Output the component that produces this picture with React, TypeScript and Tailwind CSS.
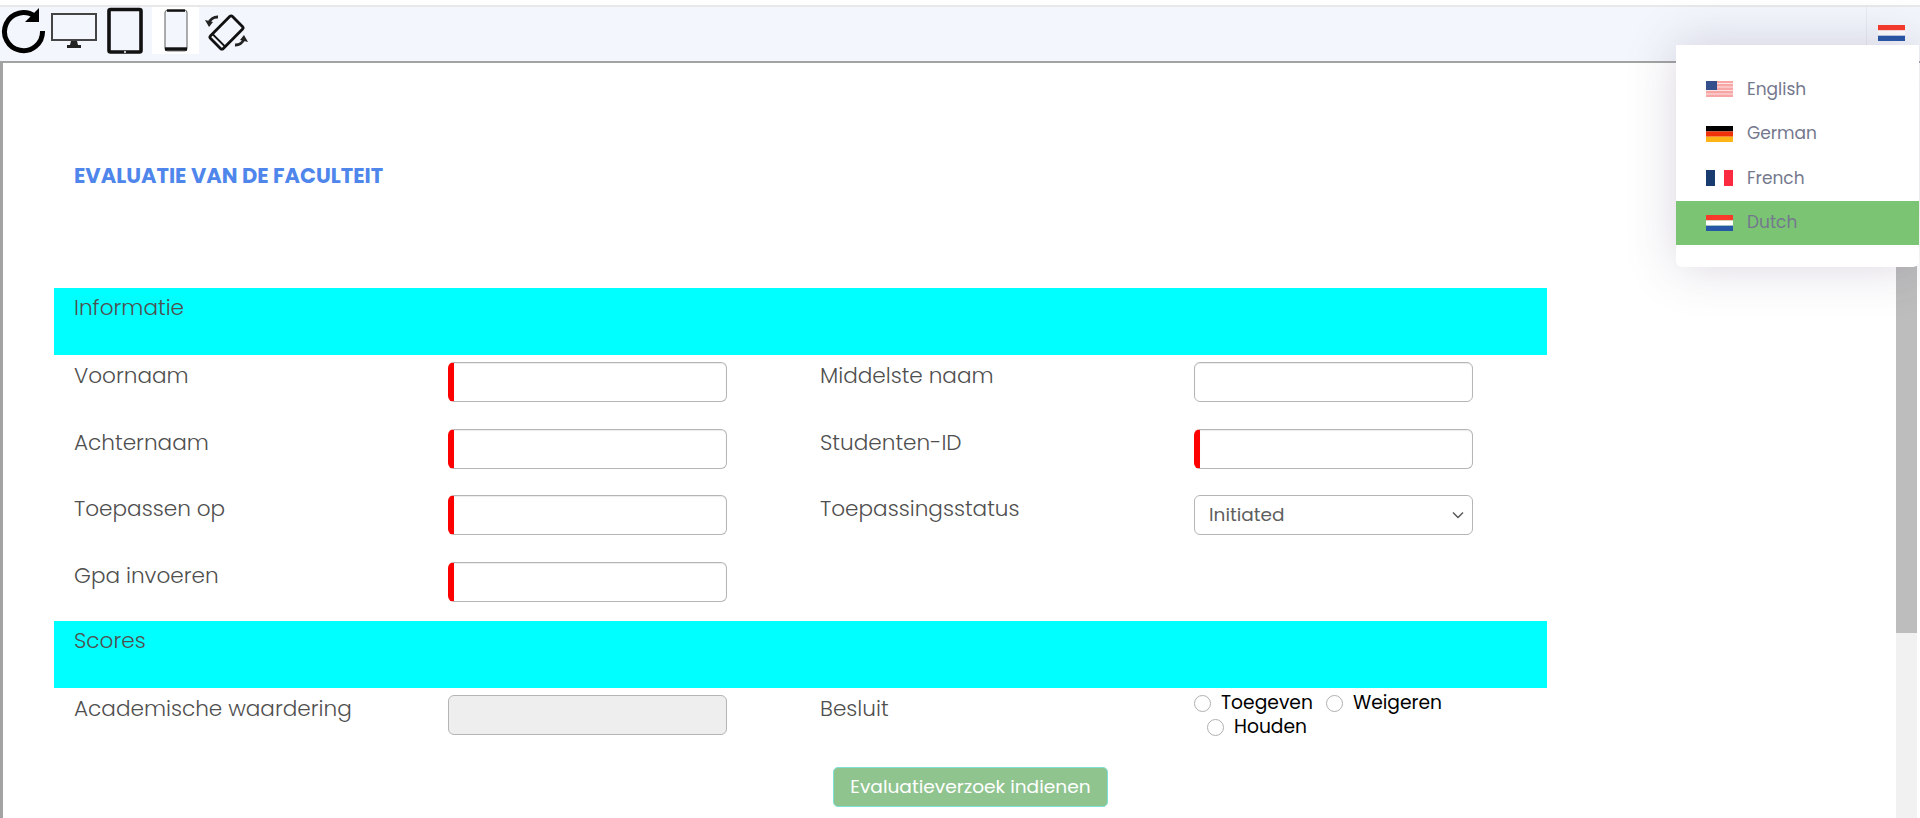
import React from "react";

const font = "font-['Poppins','Lato','Open_Sans',sans-serif]";

function Flag({ kind }: { kind: string }) {
  if (kind === "us")
    return (
      <svg width="27" height="16" viewBox="0 0 27 16" className="shrink-0">
        <rect width="27" height="16" fill="#f8a5a5" />
        <path d="M0 2.5h27M0 6h27M0 9.5h27M0 13h27" stroke="#fde4e4" strokeWidth="1.2" />
        <rect width="11" height="9" fill="#34508c" />
      </svg>
    );
  if (kind === "de")
    return (
      <svg width="27" height="16" viewBox="0 0 27 16" className="shrink-0">
        <rect width="27" height="5.4" fill="#000" />
        <rect y="5.4" width="27" height="5.3" fill="#f0320a" />
        <rect y="10.7" width="27" height="5.3" fill="#fdb515" />
      </svg>
    );
  if (kind === "fr")
    return (
      <svg width="27" height="16" viewBox="0 0 27 16" className="shrink-0">
        <rect width="9" height="16" fill="#193c70" />
        <rect x="9" width="9" height="16" fill="#fff" />
        <rect x="18" width="9" height="16" fill="#fc2a41" />
      </svg>
    );
  return (
    <svg width="27" height="16" viewBox="0 0 27 16" className="shrink-0">
      <rect width="27" height="5.4" fill="#f93a2a" />
      <rect y="5.4" width="27" height="5.3" fill="#fff" />
      <rect y="10.7" width="27" height="5.3" fill="#2657a7" />
    </svg>
  );
}

function Toolbar() {
  return (
    <div className="h-[54px] flex bg-[#f3f6fc] items-start overflow-hidden">
      <svg width="48" height="54" viewBox="0 0 48 54" className="shrink-0">
        <path d="M35 9.5 A19 19 0 1 0 42.5 24" fill="none" stroke="#000" strokeWidth="5" />
        <path d="M39 1 L39 15 L25 15 Z" fill="#000" />
      </svg>
      <svg width="55" height="54" viewBox="48 0 55 54" className="shrink-0">
        <rect x="52" y="7" width="44" height="26" fill="#f3f6fc" stroke="#444" strokeWidth="2" />
        <path d="M71 34h6l1 4h3v3H67v-3h3z" fill="#222" />
      </svg>
      <svg width="45" height="54" viewBox="103 0 45 54" className="shrink-0">
        <rect x="109" y="2.5" width="32" height="42.5" rx="1.5" fill="#f3f6fc" stroke="#111" strokeWidth="3.6" />
        <circle cx="125" cy="45" r="1" fill="#fff" />
      </svg>
      <div className="w-[47px] h-[47px] ml-[4px] bg-white shrink-0 flex items-start justify-center pt-[2px]">
        <svg width="24" height="43" viewBox="0 0 24 43">
          <rect x="1" y="1" width="22" height="41" rx="3" fill="#f3f6fc" stroke="#777" strokeWidth="1.2" />
          <path d="M3 1.6h18" stroke="#111" strokeWidth="2.4" />
          <path d="M1 40h22" stroke="#111" strokeWidth="3.4" />
        </svg>
      </div>
      <svg width="48" height="48" viewBox="0 0 48 48" className="ml-[2px] shrink-0">
        <g transform="rotate(45 25.5 25.5)">
          <rect x="16.5" y="10" width="18" height="31" rx="2" fill="none" stroke="#111" strokeWidth="2.8" />
          <path d="M16.5 36.5h18" stroke="#111" strokeWidth="2" />
        </g>
        <path d="M8 16a9 9 0 0 1 9-6" fill="none" stroke="#222" strokeWidth="2.8" />
        <path d="M4 13l8 2-4 5z" fill="#222" />
        <path d="M43 32a9 9 0 0 1-9 6" fill="none" stroke="#222" strokeWidth="2.8" />
        <path d="M47 35l-8-2 4-5z" fill="#222" />
      </svg>
      <div className="ml-auto w-[54px] h-full border-l border-[#e6e9f2] flex justify-end pt-[18px] pr-[15px]">
        <Flag kind="nl" />
      </div>
    </div>
  );
}

function Label({ children }: { children: React.ReactNode }) {
  return <div className="w-[394px] shrink-0 pl-5 text-[21.6px] font-light leading-[28px] text-[#4f4f4f]">{children}</div>;
}

function Input({ req }: { req?: boolean }) {
  return (
    <div className={`w-[279px] h-[40px] rounded-[6px] border border-[#b5b5b5] bg-white shadow-[inset_0_1px_1px_rgba(0,0,0,0.08)] ${req ? "border-l-[6px] border-l-[#ff0000]" : ""}`} />
  );
}

function Cell({ label, children }: { label?: string; children?: React.ReactNode }) {
  return (
    <div className="flex w-[746px] shrink-0">
      {label ? <Label>{label}</Label> : <div className="w-[394px] shrink-0" />}
      <div className="w-[352px] shrink-0">{children}</div>
    </div>
  );
}

function Row({ children }: { children: React.ReactNode }) {
  return <div className="flex h-[66.6px] pt-[7px]">{children}</div>;
}

function Section({ children }: { children: string }) {
  return <div className="h-[66.6px] bg-[#00ffff] pl-5 pt-[5px] text-[21.6px] font-light leading-[30px] text-[#4f4f4f]">{children}</div>;
}

function Radio({ label }: { label: string }) {
  return (
    <span className="inline-flex items-center gap-[10px]">
      <span className="w-[17px] h-[17px] rounded-full border border-[#b0b0b0] bg-white" />
      <span className="text-black text-[18.7px] leading-[24.5px]">{label}</span>
    </span>
  );
}

function Menu() {
  const items = [
    ["us", "English"],
    ["de", "German"],
    ["fr", "French"],
    ["nl", "Dutch"],
  ];
  return (
    <div className="absolute left-[1676px] top-[45px] w-[243px] h-[222px] bg-white rounded-b-[6px] pt-[22px] shadow-[0_0_50px_rgba(82,63,105,0.22)]">
      {items.map(([k, n]) => (
        <div key={k} className={`h-[44.6px] flex items-center pl-[30px] gap-[14px] text-[17px] text-[#74788d] ${k === "nl" ? "bg-[#7ac474]" : ""}`}>
          <Flag kind={k} />
          <span>{n}</span>
        </div>
      ))}
    </div>
  );
}

export default function App() {
  return (
    <div className={`${font} relative w-[1920px] h-[818px] overflow-hidden bg-white`}>
      <div className="h-[7px] border-b-2 border-[#e8e8e8]" />
      <Toolbar />
      <div className="relative h-[757px] border-l-[3px] border-t-2 border-[#a3a3a3] pl-[51px] pr-[373px] overflow-hidden">
        <div className="h-[225.4px] pl-5 pt-[99px]">
          <h1 className="text-[21px] leading-[28px] font-bold text-[#4f86ec]">EVALUATIE VAN DE FACULTEIT</h1>
        </div>
        <Section>Informatie</Section>
        <Row>
          <Cell label="Voornaam"><Input req /></Cell>
          <Cell label="Middelste naam"><Input /></Cell>
        </Row>
        <Row>
          <Cell label="Achternaam"><Input req /></Cell>
          <Cell label="Studenten-ID"><Input req /></Cell>
        </Row>
        <Row>
          <Cell label="Toepassen op"><Input req /></Cell>
          <Cell label="Toepassingsstatus">
            <div className="w-[279px] h-[40px] rounded-[6px] border border-[#b5b5b5] bg-white flex items-center justify-between pl-[14px] pr-[8px] text-[18.5px] text-[#5f5f5f]">
              <span>Initiated</span>
              <svg width="12" height="8" viewBox="0 0 12 8"><path d="M1 1.5l5 5 5-5" fill="none" stroke="#555" strokeWidth="1.4" /></svg>
            </div>
          </Cell>
        </Row>
        <Row>
          <Cell label="Gpa invoeren"><Input req /></Cell>
          <Cell />
        </Row>
        <Section>Scores</Section>
        <Row>
          <Cell label="Academische waardering">
            <div className="w-[279px] h-[40px] rounded-[6px] border border-[#b5b5b5] bg-[#eeeeee]" />
          </Cell>
          <Cell label="Besluit">
            <div className="-mt-[4px] w-[290px]">
              <div className="flex gap-[13px] h-[24.5px] items-center"><Radio label="Toegeven" /><Radio label="Weigeren" /></div>
              <div className="pl-[13px] h-[24.5px] flex items-center"><Radio label="Houden" /></div>
            </div>
          </Cell>
        </Row>
        <div className="flex pl-[779px] pt-[12px]">
          <button className="w-[275px] h-[40px] rounded-[5px] border border-[#7fe0d8] bg-[#8fc48f] text-white text-[18.6px]">Evaluatieverzoek indienen</button>
        </div>
        <div className="absolute right-[3px] top-0 bottom-0 w-[21px] bg-[#f1f1f1]">
          <div className="h-[570px] bg-[#bdbdbd]" />
        </div>
      </div>
      <Menu />
    </div>
  );
}
